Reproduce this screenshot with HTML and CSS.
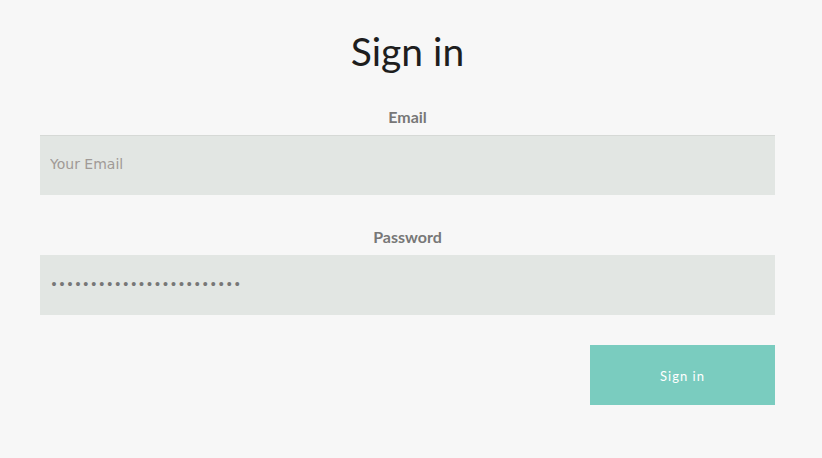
FILE: index.html
```html
<!DOCTYPE html>
<html>
<head>
<meta charset="utf-8">
<link rel="stylesheet" href="styles.css">
</head>
<body>
<main class="page">
  <h1 class="title">Sign in</h1>
  <form class="form">
    <div class="field field-email">
      <label class="label" for="email">Email</label>
      <input class="input" id="email" type="email" placeholder="Your Email">
    </div>
    <div class="field">
      <label class="label" for="pw">Password</label>
      <input class="input input-pw" id="pw" type="password" value="passwordpasswordpassword">
    </div>
    <div class="actions">
      <button class="btn" type="button">Sign in</button>
    </div>
  </form>
</main>
</body>
</html>
```
FILE: styles.css
```css
html, body {
  margin: 0;
  padding: 0;
  background: #f7f7f7;
}
body {
  font-family: "Lato", sans-serif;
  color: #222;
}
.page {
  width: 735px;
  margin-left: 40px;
  padding-top: 25px;
}
.title {
  margin: 0;
  text-align: center;
  font-family: "Lato", sans-serif;
  font-weight: 400;
  font-size: 39px;
  line-height: 52px;
  color: #1e1e1e;
}
.form {
  display: flex;
  flex-direction: column;
  margin-top: 30px;
}
.field {
  display: flex;
  flex-direction: column;
  margin-bottom: 30px;
}
.field-email {
  margin-bottom: 32px;
}
.label {
  display: block;
  text-align: center;
  font-weight: 700;
  font-size: 16px;
  line-height: 20px;
  color: #777;
  margin-bottom: 8px;
}
.input {
  box-sizing: border-box;
  height: 60px;
  width: 100%;
  border: none;
  border-top: 1px solid #d6d9d6;
  background: #e2e6e3;
  padding: 0 10px 4px;
  font-family: "DejaVu Sans", sans-serif;
  font-size: 14px;
  color: #777;
  outline: none;
  margin: 0;
}
.input-pw {
  border-top: none;
  padding: 0 10px 2px;
  font-size: 13.5px;
}
.input::placeholder {
  color: #a09a96;
}
.actions {
  display: flex;
  justify-content: flex-end;
}
.btn {
  width: 185px;
  height: 60px;
  border: none;
  background: #7accbf;
  color: #fff;
  font-family: "Lato", sans-serif;
  font-size: 13px;
  letter-spacing: 1px;
  padding: 2px 0 0;
  cursor: pointer;
}
```
